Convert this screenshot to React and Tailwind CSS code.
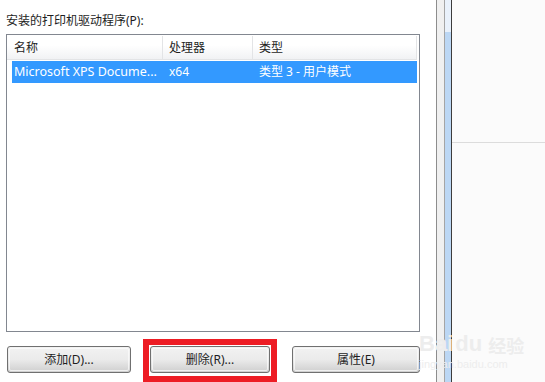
import React from 'react'

const FONT = { fontFamily: '"Noto Sans", "Noto Sans CJK SC", sans-serif' }

function WinButton({ children }) {
  return (
    <div className="h-[27px] rounded-[3px] border border-[#707070] bg-gradient-to-b from-[#f2f2f2] via-[#ebebeb] to-[#cfcfcf] p-px">
      <div className="h-full rounded-[2px] border border-[#fcfcfc]/70 flex items-center justify-center text-[12px] text-[#1e1e1e]">
        {children}
      </div>
    </div>
  )
}

export default function App() {
  return (
    <div className="w-[545px] h-[382px] bg-white flex overflow-hidden relative" style={FONT}>
      {/* dialog area */}
      <div className="w-[436px] shrink-0 pl-[6px] pr-[16px] flex flex-col">
        <p className="text-[12px] text-[#1e1e1e] leading-none mt-[15px] h-[19px]">安装的打印机驱动程序(P):</p>

        {/* driver list */}
        <div className="h-[298px] border border-[#828790] pt-px pr-[2px] flex flex-col">
          <div className="h-[24px] flex text-[12px] text-[#1e1e1e] bg-gradient-to-b from-white from-40% to-[#f1f2f4] border-b border-r border-[#e3e4e6]">
            <div className="w-[156px] pl-[7px] flex items-center border-r border-[#e3e4e6]">名称</div>
            <div className="w-[90px] pl-[6px] flex items-center border-r border-[#e3e4e6]">处理器</div>
            <div className="flex-1 pl-[6px] flex items-center">类型</div>
          </div>
          <div className="mt-px ml-[5px] h-[22px] bg-[#3399ff] text-white text-[12px] flex items-center">
            <div className="w-[151px] pl-[2px] whitespace-nowrap text-[12.5px]">Microsoft XPS Docume...</div>
            <div className="w-[90px] pl-[6px]">x64</div>
            <div className="flex-1 pl-[6px]">类型 3 - 用户模式</div>
          </div>
        </div>

        {/* buttons */}
        <div className="mt-[7px] flex items-start">
          <div className="w-[124px] mt-[7px] ml-px">
            <WinButton>添加(D)...</WinButton>
          </div>
          <div className="ml-[12px] border-[6px] border-[#ed1c24] p-px w-[134px] h-[43px]">
            <WinButton>删除(R)...</WinButton>
          </div>
          <div className="ml-[15px] mt-[7px] w-[128px]">
            <WinButton>属性(E)</WinButton>
          </div>
        </div>
      </div>

      {/* splitter */}
      <div className="w-[1px] bg-[#8d8d8d]" />
      <div className="w-[7px] bg-[#f0f0f0]" />
      <div className="w-[1px] bg-[#a5a5a5]" />
      <div className="w-[6px] flex flex-col">
        <div className="h-[32px] bg-[#e9f1fb]" />
        <div className="flex-1 bg-[#bcd7f4]" />
      </div>
      <div className="w-[1px] bg-[#3c3c3c]" />

      {/* right pane */}
      <div className="flex-1 bg-[#fbfbfb] flex flex-col">
        <div className="h-[142px]" />
        <div className="h-px bg-[#dcdcdc]" />
      </div>

      {/* watermark */}
      <div className="absolute left-[419px] top-[333px] text-[#ededed] select-none pointer-events-none">
        <div className="flex items-end gap-[2px] leading-none">
          <span className="text-[22px] font-bold" style={{ fontFamily: '"Liberation Sans", sans-serif' }}>Bai</span>
          <span className="text-[22px] font-bold" style={{ fontFamily: '"Liberation Sans", sans-serif' }}>du</span>
          <span className="text-[18px] font-bold ml-[4px]">经验</span>
        </div>
        <div className="text-[11px] leading-none mt-[4px]" style={{ fontFamily: '"Liberation Sans", sans-serif' }}>jingyan.baidu.com</div>
      </div>
    </div>
  )
}
